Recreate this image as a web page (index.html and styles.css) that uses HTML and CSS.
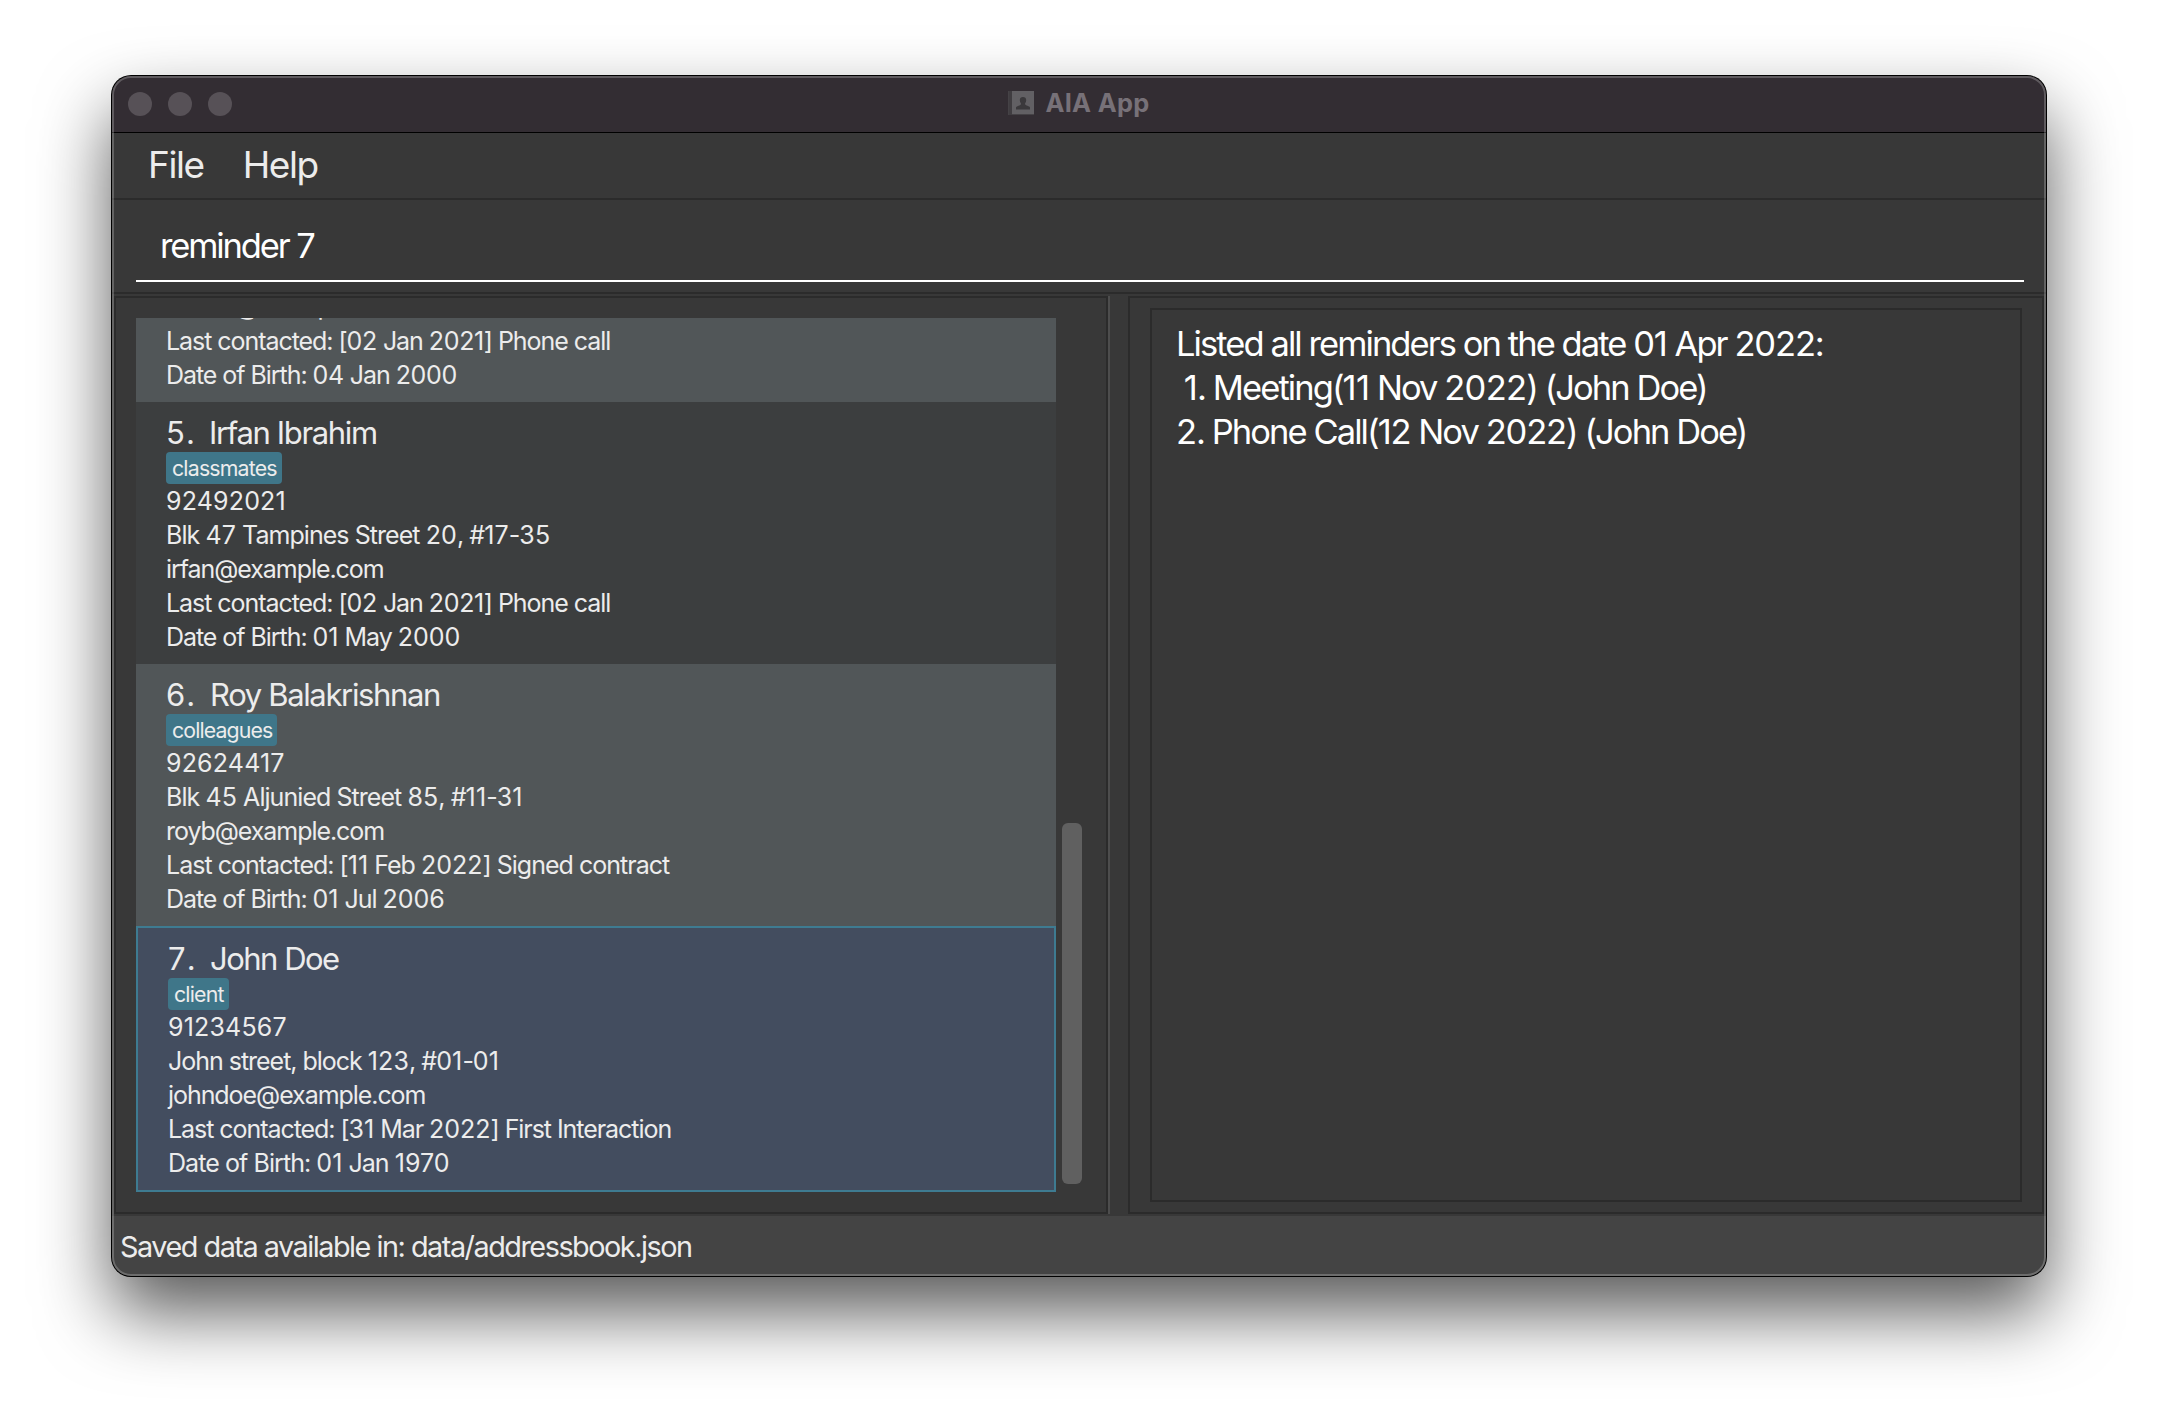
FILE: index.html
```html
<!DOCTYPE html>
<html lang="en">
<head>
<meta charset="utf-8">
<title>AIA App</title>
<link rel="stylesheet" href="styles.css">
</head>
<body>
<main class="window">
  <header class="titlebar">
    <div class="lights"><i></i><i></i><i></i></div>
    <div class="title">
      <svg class="app-icon" width="26" height="24" viewBox="0 0 26 24">
        <rect x="0" y="0" width="26" height="24" fill="#454246"/>
        <rect x="1" y="0" width="3" height="24" fill="#403d41"/>
        <rect x="4" y="0" width="22" height="23" fill="#626064"/>
        <path d="M8 18.500v-2c0-1.600 5-1.800 5-3.500 0-.8-1.200-1.600-1.200-4 0-2 1.200-3 3.200-3s3.200 1 3.200 3c0 2.400-1.200 3.200-1.200 4 0 1.700 5 1.900 5 3.500v2z" fill="#3b393c"/>
      </svg>
      <span>AIA App</span>
    </div>
  </header>
  <nav class="menu"><span>File</span><span>Help</span></nav>
  <section class="command"><div class="command-field">reminder <span class="num">7</span></div></section>
  <section class="panes">
    <div class="pane people">
      <div class="list">
        <article class="person even david">
          <p class="email">lidavid@example.com</p>
          <p class="contact">Last contacted: [<span class="num">02</span> Jan <span class="num">2021</span>] Phone call</p>
          <p class="birth">Date of Birth: <span class="num">04</span> Jan <span class="num">2000</span></p>
        </article>
        <article class="person irfan">
          <h2><span class="index">5.</span>Irfan Ibrahim</h2>
          <div class="tags"><span class="tag">classmates</span></div>
          <p class="phone">92492021</p>
          <p class="address">Blk <span class="num">47</span> Tampines Street <span class="num">20</span>, #<span class="num">17</span>-<span class="num">35</span></p>
          <p class="email">irfan@example.com</p>
          <p class="contact">Last contacted: [<span class="num">02</span> Jan <span class="num">2021</span>] Phone call</p>
          <p class="birth">Date of Birth: <span class="num">01</span> May <span class="num">2000</span></p>
        </article>
        <article class="person even roy">
          <h2><span class="index">6.</span>Roy Balakrishnan</h2>
          <div class="tags"><span class="tag">colleagues</span></div>
          <p class="phone">92624417</p>
          <p class="address">Blk <span class="num">45</span> Aljunied Street <span class="num">85</span>, #<span class="num">11</span>-<span class="num">31</span></p>
          <p class="email">royb@example.com</p>
          <p class="contact">Last contacted: [<span class="num">11</span> Feb <span class="num">2022</span>] Signed contract</p>
          <p class="birth">Date of Birth: <span class="num">01</span> Jul <span class="num">2006</span></p>
        </article>
        <article class="person selected john">
          <h2><span class="index">7.</span>John Doe</h2>
          <div class="tags"><span class="tag">client</span></div>
          <p class="phone">91234567</p>
          <p class="address">John street, block <span class="num">123</span>, #<span class="num">01</span>-<span class="num">01</span></p>
          <p class="email">johndoe@example.com</p>
          <p class="contact">Last contacted: [<span class="num">31</span> Mar <span class="num">2022</span>] First Interaction</p>
          <p class="birth">Date of Birth: <span class="num">01</span> Jan <span class="num">1970</span></p>
        </article>
      </div>
      <div class="scrollbar"><div class="thumb"></div></div>
    </div>
    <div class="divider"></div>
    <div class="pane results">
      <div class="result-box">
        <p>Listed all reminders on the date <span class="num">01</span> Apr <span class="num">2022</span>:</p>
        <p class="loose">&nbsp;<span class="num">1</span>. Meeting(<span class="num">11</span> Nov <span class="num">2022</span>) (John Doe)</p>
        <p><span class="num">2</span>. Phone Call(<span class="num">12</span> Nov <span class="num">2022</span>) (John Doe)</p>
      </div>
    </div>
  </section>
  <footer class="status">Saved data available in: data/addressbook.json</footer>
</main>
</body>
</html>
```
FILE: styles.css
```css
* { box-sizing: border-box; }

body {
  margin: 0;
  height: 1424px;
  overflow: hidden;
  background: #fff;
  font-family: Inter, "Liberation Sans", sans-serif;
  font-weight: 400;
}

h2, p { margin: 0; font-weight: 400; }

.window {
  position: relative;
  display: flex;
  flex-direction: column;
  width: 1934px;
  height: 1200px;
  margin: 76px 0 0 112px;
  border-radius: 19px;
  overflow: hidden;
  background: #383838;
  box-shadow: 0 0 0 1px #000, 0 36px 72px rgba(0, 0, 0, .66);
  color: #ececec;
}

/* light rim drawn over the window edge */
.window::after {
  content: "";
  position: absolute;
  inset: 0;
  border: 2px solid rgba(255, 255, 255, .22);
  border-radius: inherit;
  pointer-events: none;
}

.titlebar {
  display: grid;
  grid-template-columns: 1fr auto 1fr;
  align-items: center;
  height: 57px;
  flex: none;
  background: #332d33;
  border-bottom: 1px solid #000;
}
.lights { display: flex; gap: 16px; padding-left: 16px; }
.lights i { width: 24px; height: 24px; border-radius: 50%; background: #575157; }
.title {
  display: flex;
  align-items: center;
  gap: 11px;
  padding-bottom: 3px;
  color: #777178;
  font-size: 25.4px;
  font-weight: 700;
  line-height: 32px;
  letter-spacing: .3px;
}
.app-icon { display: block; }

.menu {
  display: flex;
  gap: 39px;
  height: 67px;
  flex: none;
  padding-left: 36px;
  border-bottom: 2px solid #2b2b2b;
  font-size: 37px;
  line-height: 63px;
  letter-spacing: -1.4px;
}

.command {
  height: 94px;
  flex: none;
  padding: 13px 22px 0 24px;
  border-bottom: 2px solid #2b2b2b;
}
.command-field {
  height: 69px;
  padding-left: 24px;
  border-bottom: 2px solid #fff;
  color: #fff;
  font-size: 34.5px;
  line-height: 66px;
  letter-spacing: -2.13px;
}

.panes { display: flex; height: 918px; margin: 2px 2px; flex: none; }
.pane { border: 2px solid #2b2b2b; }

.people { display: flex; width: 994px; padding: 20px 24px 20px 20px; }
.list {
  display: flex;
  flex-direction: column;
  justify-content: flex-end;
  width: 920px;
  height: 874px;
  overflow: hidden;
}
.person {
  flex: none;
  padding: 10px 30px 10px;
  background: #3c3e3f;
  font-size: 25px;
  line-height: 34px;
  white-space: nowrap;
}
.person.even { background: #515658; }
.person.selected { background: #434d5f; border: 2px solid #3e7b91; }
.person h2 {
  display: flex;
  height: 40px;
  font-size: 31px;
  line-height: 41px;
  letter-spacing: -1.35px;
}
.index { width: 43px; letter-spacing: 2px; }
.roy .index { width: 44px; }
.john .index { width: 42px; letter-spacing: 5px; }
.john h2 { letter-spacing: -1.5px; }
.tags { display: flex; height: 32px; }
.tag {
  padding: 0 5px 0 6px;
  border-radius: 4px;
  background: #3f7689;
  font-size: 21.3px;
  line-height: 32px;
  letter-spacing: -.8px;
}
.roy .tag { letter-spacing: -.88px; }
.phone { letter-spacing: .18px; }
.address { letter-spacing: -.95px; }
.john .address { letter-spacing: -1.02px; }
.email { letter-spacing: -1.06px; }
.contact { letter-spacing: -1.05px; }
.roy .contact { letter-spacing: -.98px; }
.birth { letter-spacing: -1.05px; }
.john .birth { letter-spacing: -.93px; }
.person .num { letter-spacing: 0; }
.address .num { letter-spacing: .15px; }
.david .num, .irfan .contact .num { letter-spacing: -.35px; }
/* the partly scrolled row sits one pixel higher */
.david .email { line-height: 32px; padding-bottom: 2px; }

.scrollbar { width: 20px; margin-left: 6px; padding-top: 505px; }
.thumb { height: 361px; border-radius: 6px; background: #606060; }

.divider { width: 20px; border-left: 2px solid #4d4d4d; }

.results { flex: 1; padding: 10px 20px; }
.result-box {
  height: 894px;
  padding: 12px 24px;
  border: 2px solid #2b2b2b;
  color: #fff;
  font-size: 34.5px;
  line-height: 44px;
  letter-spacing: -1.93px;
  white-space: nowrap;
}
.result-box .num { letter-spacing: -1.13px; }
.result-box .loose .num { letter-spacing: -.75px; }

.status {
  flex: 1;
  padding-left: 8px;
  background: #444;
  font-size: 28.8px;
  line-height: 61px;
  letter-spacing: -1.48px;
}
```
